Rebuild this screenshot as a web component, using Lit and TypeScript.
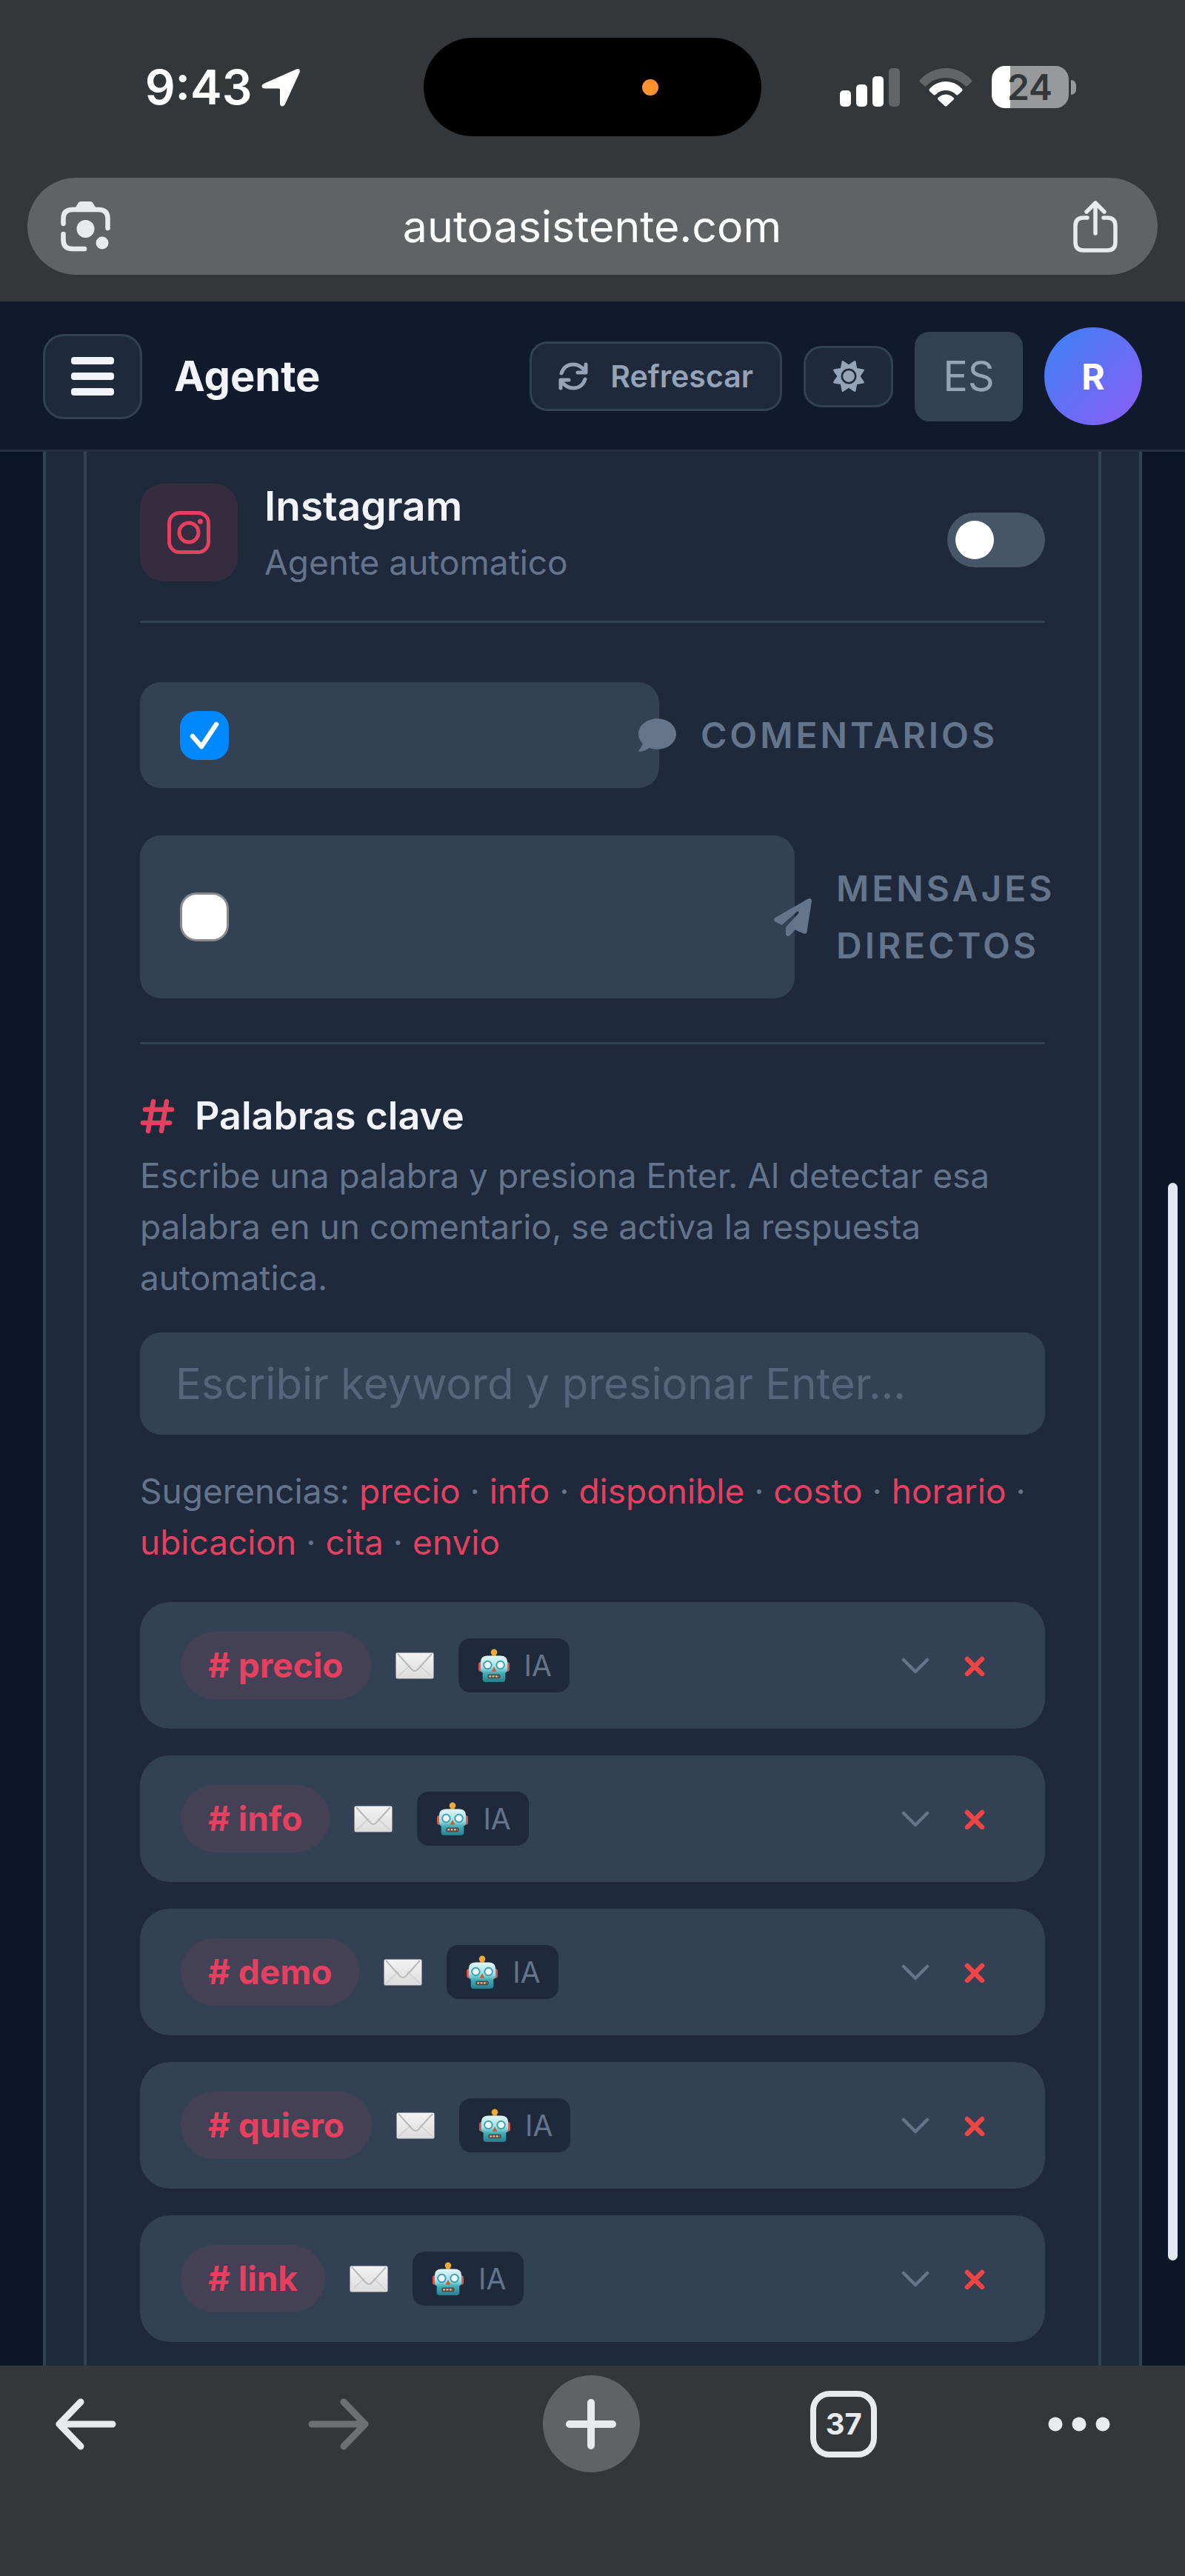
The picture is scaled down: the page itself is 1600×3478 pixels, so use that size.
import { LitElement, html, css, svg, nothing } from "lit";
import { customElement, property, state } from "lit/decorators.js";

const tokens = css`
  :host {
    font-family: Inter, "Liberation Sans", sans-serif;
    --chrome: #34373a;
    --chrome-soft: #5f6366;
    --chrome-ink: #e8eaed;
    --bar: #11192d;
    --page: #0d1629;
    --card: #1e293b;
    --line: #334155;
    --field: #334155;
    --ink: #f1f5f9;
    --soft: #94a3b8;
    --muted: #64748b;
    --accent: #e4405f;
  }
  *,
  *::before,
  *::after {
    box-sizing: border-box;
  }
  svg {
    display: block;
    flex: none;
  }
  button {
    font: inherit;
    color: inherit;
    background: none;
    border: 0;
    margin: 0;
    padding: 0;
    cursor: pointer;
  }
`;

/* Phone status row and the browser address pill. */
@customElement("browser-top")
export class BrowserTop extends LitElement {
  static styles = [
    tokens,
    css`
      :host {
        display: block;
        background: var(--chrome);
        color: #fff;
      }
      .status {
        display: grid;
        grid-template-columns: 1fr 456px 1fr;
        align-items: center;
        padding-top: 51px;
      }
      .clock,
      .signals {
        display: flex;
        align-items: center;
        justify-content: center;
      }
      .clock {
        gap: 13px;
        padding-left: 30px;
        font-size: 64px;
        font-weight: 600;
        line-height: 80px;
      }
      .signals {
        gap: 26px;
        padding-right: 42px;
      }
      .island {
        height: 133px;
        border-radius: 67px;
        background: #000;
        display: flex;
        align-items: center;
        justify-content: flex-end;
        padding-right: 139px;
      }
      .dot {
        width: 22px;
        height: 22px;
        border-radius: 50%;
        background: #ff9230;
      }
      .battery {
        display: flex;
        align-items: center;
        gap: 3px;
      }
      .cell {
        width: 104px;
        height: 57px;
        border-radius: 18px;
        background: linear-gradient(90deg, #fff 24%, #98999b 24%);
        color: #34373a;
        font-size: 48px;
        font-weight: 600;
        line-height: 57px;
        text-align: center;
      }
      .nub {
        width: 7px;
        height: 20px;
        border-radius: 0 7px 7px 0;
        background: #98999b;
      }
      .address {
        display: flex;
        align-items: center;
        justify-content: space-between;
        height: 131px;
        margin: 56px 37px 0;
        padding: 0 54px 0 44px;
        border-radius: 66px;
        background: var(--chrome-soft);
        color: var(--chrome-ink);
      }
      .site {
        font-size: 59px;
        line-height: 80px;
        color: #fff;
      }
      .tail {
        height: 36px;
      }
    `,
  ];

  render() {
    return html`
      <div class="status">
        <div class="clock">
          <span>9:43</span>
          <svg width="53" height="52" viewBox="0 0 53 52" aria-hidden="true">
            <path d="M47 1.500Q53 -0.500 51.500 6L32 48.500Q30 52 27.500 51.500Q25 51 25 47V29Q25 27.500 23.500 27.500H5Q1 27.500 0.500 25Q0 22.500 4 20.500Z" fill="#fff" />
          </svg>
        </div>
        <div class="island"><span class="dot"></span></div>
        <div class="signals">
          <svg width="81" height="52" viewBox="0 0 81 52" aria-hidden="true" fill="#fff">
            <rect x="0" y="30" width="15" height="22" rx="5" />
            <rect x="22" y="22" width="15" height="30" rx="5" />
            <rect x="44" y="11" width="15" height="41" rx="5" />
            <rect x="66" y="0" width="15" height="52" rx="5" fill="#626568" />
          </svg>
          <svg width="72" height="52" viewBox="0 0 72 52" aria-hidden="true">
            <path d="M1 16Q16 0 36 0T71 16Q72 17.500 70.500 19L65 24Q63.500 25 62 23.500Q51 13 36 13T10 23.500Q8.500 25 7 24L1.500 19Q0 17.500 1 16Z" fill="#626568" />
            <path d="M14 28Q23 18 36 18T58 28Q59 29.500 58 31L52.500 36Q51 37 49.500 35.500Q44 30 36 30T22.500 35.500Q21 37 19.500 36L14 31Q13 29.500 14 28Z" fill="#fff" />
            <path d="M25.500 40Q30 35.500 36 35.500T46.500 40Q47.500 41 46.500 42.500L37.500 51Q36 52 34.500 51L25.500 42.500Q24.500 41 25.500 40Z" fill="#fff" />
          </svg>
          <div class="battery"><span class="cell">24</span><span class="nub"></span></div>
        </div>
      </div>
      <div class="address">
        <button aria-label="Buscar con la cámara">
          <svg width="69" height="69" viewBox="0 0 69 69" fill="none" stroke="currentColor" stroke-width="6.500" stroke-linecap="round">
            <path d="M4.500 31V24Q4.500 12 17 12H52Q64.500 12 64.500 24V37" />
            <path d="M4.500 45V53Q4.500 65 17 65H33" />
            <path d="M19 12L25 2.500Q26 1 28 1H41Q43 1 44 2.500L50 12Z" fill="currentColor" stroke="none" />
            <circle cx="34.500" cy="38" r="12" fill="currentColor" stroke="none" />
            <circle cx="57" cy="57" r="8.500" fill="currentColor" stroke="none" />
          </svg>
        </button>
        <span class="site">autoasistente.com</span>
        <button aria-label="Compartir">
          <svg width="60" height="70" viewBox="0 0 60 70" fill="none" stroke="currentColor" stroke-width="5.500" stroke-linecap="round" stroke-linejoin="round">
            <path d="M19 23H14Q3 23 3 34V56Q3 67 14 67H46Q57 67 57 56V34Q57 23 46 23H41" />
            <path d="M30 44V4M18 15L30 3L42 15" />
          </svg>
        </button>
      </div>
      <div class="tail"></div>
    `;
  }
}

/* Application bar of the page. */
@customElement("agent-header")
export class AgentHeader extends LitElement {
  static styles = [
    tokens,
    css`
      :host {
        display: block;
        background: var(--bar);
        border-bottom: 3px solid #242f43;
      }
      .bar {
        display: flex;
        align-items: center;
        gap: 29px;
        padding: 35px 58px 33px;
      }
      .menu {
        display: grid;
        place-items: center;
        width: 134px;
        height: 115px;
        border: 3px solid var(--line);
        border-radius: 28px;
        background: var(--card);
        color: var(--ink);
      }
      h1 {
        flex: 1;
        margin: 0 0 0 14px;
        font-size: 56px;
        line-height: 80px;
        font-weight: 700;
        color: var(--ink);
      }
      .refresh,
      .theme {
        display: flex;
        align-items: center;
        justify-content: center;
        border: 3px solid var(--line);
        border-radius: 24px;
        background: var(--card);
        color: var(--soft);
      }
      .refresh {
        gap: 30px;
        height: 94px;
        padding: 0 36px;
        font-size: 41px;
        font-weight: 600;
      }
      .theme {
        width: 121px;
        height: 83px;
      }
      .lang {
        width: 146px;
        height: 121px;
        border-radius: 20px;
        background: var(--line);
        color: var(--soft);
        font-size: 56px;
      }
      .avatar {
        width: 132px;
        height: 132px;
        border-radius: 50%;
        background: linear-gradient(135deg, #3b82f6, #8b5cf6);
        color: #fff;
        font-size: 48px;
        font-weight: 700;
      }
    `,
  ];

  render() {
    return html`
      <header class="bar">
        <button class="menu" aria-label="Menú">
          <svg width="58" height="52" viewBox="0 0 58 52" fill="currentColor">
            <rect width="58" height="10" rx="4" />
            <rect y="21" width="58" height="10" rx="4" />
            <rect y="42" width="58" height="10" rx="4" />
          </svg>
        </button>
        <h1>Agente</h1>
        <button class="refresh">
          <svg width="40" height="38" viewBox="0 0 40 38" fill="none" stroke="currentColor" stroke-width="5" stroke-linecap="round" stroke-linejoin="round">
            <path d="M4 15Q8 3 20 3Q29 3 36 12M37 3V14H26" />
            <path d="M36 23Q32 35 20 35Q11 35 4 26M3 35V24H14" />
          </svg>
          <span>Refrescar</span>
        </button>
        <button class="theme" aria-label="Tema">
          <svg width="42" height="42" viewBox="0 0 512 512" fill="currentColor">
            <path d="M361.500 1.200c5 2.100 8.600 6.600 9.600 11.900L391 121l107.900 19.800c5.300 1 9.800 4.600 11.900 9.600s1.500 10.700-1.600 15.200L446.900 256l62.300 90.300c3.100 4.500 3.700 10.200 1.600 15.200s-6.600 8.600-11.900 9.600L391 391 371.100 498.900c-1 5.300-4.600 9.800-9.600 11.900s-10.700 1.500-15.200-1.600L256 446.900l-90.300 62.300c-4.500 3.100-10.200 3.700-15.200 1.600s-8.600-6.600-9.600-11.900L121 391 13.100 371.100c-5.300-1-9.800-4.600-11.900-9.600s-1.500-10.700 1.600-15.200L65.100 256 2.800 165.700c-3.100-4.500-3.700-10.200-1.600-15.200s6.600-8.600 11.900-9.600L121 121 140.900 13.100c1-5.300 4.600-9.800 9.600-11.900s10.700-1.500 15.200 1.600L256 65.100 346.300 2.800c4.500-3.100 10.200-3.700 15.200-1.600zM160 256a96 96 0 1 1 192 0 96 96 0 1 1 -192 0zm224 0a128 128 0 1 0 -256 0 128 128 0 1 0 256 0z" />
          </svg>
        </button>
        <button class="lang" aria-label="Idioma: ES">ES</button>
        <button class="avatar" aria-label="Cuenta R">R</button>
      </header>
    `;
  }
}

/* One checkbox line: a wide field, an icon on its edge, a caption. */
@customElement("channel-option")
export class ChannelOption extends LitElement {
  @property() name = "";
  @property() icon: "comment" | "plane" = "comment";
  @property({ type: Boolean }) checked = false;
  @property({ type: Boolean }) narrow = false;

  static styles = [
    tokens,
    css`
      :host {
        display: block;
      }
      label {
        display: flex;
        align-items: stretch;
        color: var(--muted);
        cursor: pointer;
      }
      .field {
        flex: 1;
        display: flex;
        align-items: center;
        padding: 0 54px;
        border-radius: 28px;
        background: var(--field);
      }
      .tick {
        display: grid;
        place-items: center;
      }
      .tick > * {
        grid-area: 1 / 1;
      }
      input {
        appearance: none;
        width: 66px;
        height: 66px;
        margin: 0;
        border: 3px solid #8a8a8e;
        border-radius: 22px;
        background: #fff;
      }
      input:checked {
        border-color: #0088ff;
        background: #0088ff;
      }
      .icon {
        align-self: center;
        margin: 0 33px 0 -28px;
      }
      .caption {
        width: 465px;
        padding: 33px 0;
        font-size: 48px;
        line-height: 77px;
        font-weight: 600;
        letter-spacing: 4px;
        text-transform: uppercase;
      }
      .narrow {
        width: 282px;
      }
    `,
  ];

  private toggle(e: Event) {
    this.checked = (e.target as HTMLInputElement).checked;
  }

  render() {
    const shape =
      this.icon === "comment"
        ? svg`<path d="M256 32C114.600 32 0 125.100 0 240c0 49.600 21.400 95 57 130.700C44.500 421.100 2.700 466 2.200 466.500c-2.200 2.300-2.800 5.700-1.500 8.700S4.800 480 8 480c66.300 0 116-31.800 140.600-51.400 32.700 12.300 69 19.400 107.400 19.400 141.400 0 256-93.100 256-208S397.400 32 256 32z" />`
        : svg`<path d="M498.100 5.600c10.100 7 15.400 19.100 13.500 31.200l-64 416c-1.500 9.700-7.400 18.200-16 23s-18.900 5.400-28 1.600L284 427.700l-68.500 74.100c-8.900 9.700-22.900 12.900-35.200 8.100S160 493.200 160 480V396.400c0-4 1.500-7.800 4.200-10.700L331.800 202.800c5.800-6.300 5.600-16-.4-22s-15.700-6.400-22-.7L106 360.800 17.700 316.600C7.100 311.300 .3 300.700 0 288.900s5.900-22.800 16.100-28.700l448-256c10.700-6.100 23.900-5.500 34 1.400z" />`;
    return html`
      <label>
        <span class="field">
          <span class="tick">
            <input type="checkbox" .checked=${this.checked} @change=${this.toggle} />
            ${this.checked
              ? html`<svg width="40" height="40" viewBox="0 0 40 40" fill="none" stroke="#fff" stroke-width="6.500" stroke-linecap="round" stroke-linejoin="round" aria-hidden="true">
                  <path d="M4 21L16 35L36 5" />
                </svg>`
              : nothing}
          </span>
        </span>
        <svg class="icon" width="51" height="51" viewBox="0 0 512 512" fill="currentColor" aria-hidden="true">${shape}</svg>
        <span class="caption ${this.narrow ? "narrow" : ""}">${this.name}</span>
      </label>
    `;
  }
}

/* Saved keyword with its reply mode and row actions. */
@customElement("keyword-row")
export class KeywordRow extends LitElement {
  @property() word = "";

  static styles = [
    tokens,
    css`
      :host {
        display: block;
      }
      .row {
        display: flex;
        align-items: center;
        gap: 33px;
        padding: 40px 55px;
        border-radius: 40px;
        background: var(--field);
      }
      .pill {
        padding: 0 37px;
        border-radius: 46px;
        background: rgba(228, 64, 95, 0.1);
        color: var(--accent);
        font-size: 46px;
        line-height: 91px;
        font-weight: 700;
      }
      .mode {
        display: flex;
        align-items: center;
        gap: 19px;
        padding: 0 24px 0 26px;
        border-radius: 16px;
        background: var(--card);
        color: var(--muted);
        font-size: 39px;
        line-height: 73px;
      }
      .actions {
        display: flex;
        margin-left: auto;
      }
      .actions button {
        display: grid;
        place-items: center;
        width: 80px;
        height: 80px;
        color: var(--muted);
      }
      .actions .remove {
        color: #ef4444;
      }
    `,
  ];

  render() {
    return html`
      <div class="row">
        <span class="pill"># ${this.word}</span>
        <svg width="52" height="36" viewBox="0 0 52 36" role="img" aria-label="Mensaje">
          <defs>
            <linearGradient id="paper" x1="0" y1="0" x2="0" y2="1">
              <stop offset="0" stop-color="#f3f3f3" />
              <stop offset="1" stop-color="#dcdcdc" />
            </linearGradient>
          </defs>
          <rect x="0.500" y="0.500" width="51" height="35" rx="2" fill="url(#paper)" />
          <path d="M2 34L20 17M50 34L32 17" stroke="#cfcfcf" stroke-width="1.500" fill="none" />
          <path d="M3 2L22 23Q26 27 30 23L49 2" stroke="#b9b9b9" stroke-width="2" fill="none" />
        </svg>
        <span class="mode">
          <svg width="44" height="46" viewBox="0 0 46 48" aria-hidden="true">
            <defs>
              <linearGradient id="metal" x1="0" y1="0" x2="0" y2="1">
                <stop offset="0" stop-color="#e2f7f8" />
                <stop offset="0.450" stop-color="#a3dde3" />
                <stop offset="0.650" stop-color="#43b0bb" />
                <stop offset="1" stop-color="#23808e" />
              </linearGradient>
            </defs>
            <rect x="1" y="19" width="6" height="13" rx="3" fill="#d3544f" />
            <rect x="39" y="19" width="6" height="13" rx="3" fill="#d3544f" />
            <path d="M19 11L21 6H25L27 11Z" fill="#b3742a" />
            <circle cx="23" cy="5" r="4.500" fill="#efa935" />
            <path d="M4 19Q4 10 14 10H32Q42 10 42 19V29Q42 33 39 34V43Q39 47 35 47H11Q7 47 7 43V34Q4 33 4 29Z" fill="url(#metal)" />
            <circle cx="14" cy="23" r="6.500" fill="#3c9fb4" />
            <circle cx="32" cy="23" r="6.500" fill="#3c9fb4" />
            <circle cx="14" cy="23" r="4.500" fill="#eafcff" />
            <circle cx="32" cy="23" r="4.500" fill="#eafcff" />
            <path d="M23 25L26.500 32H19.500Z" fill="#c4622d" />
            <rect x="14" y="36" width="18" height="6" rx="2" fill="#59453f" />
            <path d="M16 39H30" stroke="#d9c8a4" stroke-width="2.500" stroke-dasharray="3 1.500" />
          </svg>
          <span>IA</span>
        </span>
        <div class="actions">
          <button aria-label="Desplegar ${this.word}">
            <svg width="38" height="22" viewBox="0 0 38 22" fill="none" stroke="currentColor" stroke-width="4.500" stroke-linecap="round" stroke-linejoin="round">
              <path d="M3 3L19 19L35 3" />
            </svg>
          </button>
          <button class="remove" aria-label="Eliminar ${this.word}">
            <svg width="28" height="28" viewBox="0 0 28 28" fill="none" stroke="currentColor" stroke-width="6.500" stroke-linecap="round">
              <path d="M4 5L24 25M24 5L4 25" />
            </svg>
          </button>
        </div>
      </div>
    `;
  }
}

/* Instagram card: channels, keyword entry and the saved keywords. */
@customElement("agent-panel")
export class AgentPanel extends LitElement {
  @state() private keywords = ["precio", "info", "demo", "quiero", "link"];
  private suggestions = ["precio", "info", "disponible", "costo", "horario", "ubicacion", "cita", "envio"];

  static styles = [
    tokens,
    css`
      :host {
        display: flex;
        flex-direction: column;
        padding: 0 58px;
        background: var(--page);
      }
      .outer,
      .inner {
        flex: 1;
        border: solid var(--line);
        border-width: 0 4px;
        background: var(--card);
      }
      .outer {
        display: flex;
        flex-direction: column;
        padding: 0 51px;
      }
      .inner {
        padding: 33px 72px 32px;
      }
      .account {
        display: flex;
        align-items: center;
        height: 195px;
        padding-bottom: 23px;
      }
      .who {
        flex: 1;
        align-self: flex-start;
        display: flex;
        align-items: center;
        gap: 36px;
      }
      .tile {
        display: grid;
        place-items: center;
        width: 132px;
        height: 132px;
        border-radius: 32px;
        background: rgba(228, 64, 95, 0.12);
        color: var(--accent);
      }
      h2,
      h3,
      p {
        margin: 0;
      }
      h2 {
        font-size: 55px;
        line-height: 80px;
        font-weight: 600;
        color: var(--ink);
      }
      .sub {
        font-size: 46px;
        line-height: 72px;
        color: var(--muted);
      }
      .switch {
        appearance: none;
        display: flex;
        align-items: center;
        width: 132px;
        height: 74px;
        margin: 0;
        padding: 0 11px;
        border-radius: 37px;
        background: #475569;
        cursor: pointer;
      }
      .switch::before {
        content: "";
        width: 52px;
        height: 52px;
        border-radius: 50%;
        background: #fff;
      }
      .switch:checked {
        justify-content: flex-end;
        background: var(--accent);
      }
      .options {
        display: flex;
        flex-direction: column;
        gap: 64px;
        padding: 80px 0 59px;
        border: solid var(--line);
        border-width: 3px 0;
      }
      .heading {
        display: flex;
        align-items: center;
        gap: 27px;
        margin: 57px 0 6px;
        color: var(--accent);
      }
      h3 {
        font-size: 52px;
        line-height: 80px;
        font-weight: 600;
        color: var(--ink);
      }
      .hint {
        font-size: 46px;
        line-height: 69px;
        color: var(--muted);
      }
      .entry {
        display: block;
        width: 100%;
        height: 138px;
        margin: 39px 0 42px;
        padding: 0 48px;
        border: 0;
        border-radius: 28px;
        background: var(--field);
        color: var(--ink);
        font: inherit;
        font-size: 58px;
      }
      .entry::placeholder {
        color: #56657c;
        opacity: 1;
      }
      .hint button {
        color: var(--accent);
      }
      .list {
        display: flex;
        flex-direction: column;
        gap: 36px;
        margin-top: 46px;
      }
    `,
  ];

  private add(word: string) {
    const clean = word.trim().toLowerCase();
    if (clean && !this.keywords.includes(clean)) this.keywords = [...this.keywords, clean];
  }

  private onKey(e: KeyboardEvent) {
    if (e.key !== "Enter") return;
    const field = e.target as HTMLInputElement;
    this.add(field.value);
    field.value = "";
  }

  render() {
    return html`
      <div class="outer">
        <section class="inner">
          <div class="account">
            <div class="who">
              <span class="tile">
                <svg width="60" height="60" viewBox="0 0 60 60" fill="none" stroke="currentColor" stroke-width="5" aria-hidden="true">
                  <rect x="3.500" y="3.500" width="53" height="53" rx="14" />
                  <circle cx="30" cy="30" r="13" />
                  <circle cx="45.500" cy="15" r="3.500" fill="currentColor" stroke="none" />
                </svg>
              </span>
              <div>
                <h2 id="account">Instagram</h2>
                <p class="sub">Agente automatico</p>
              </div>
            </div>
            <input class="switch" type="checkbox" role="switch" aria-labelledby="account" />
          </div>
          <div class="options">
            <channel-option name="Comentarios" icon="comment" checked></channel-option>
            <channel-option name="Mensajes directos" icon="plane" narrow></channel-option>
          </div>
          <div class="heading">
            <svg width="47" height="48" viewBox="0 0 47 48" fill="none" stroke="currentColor" stroke-width="6.500" stroke-linecap="round" aria-hidden="true">
              <path d="M18 4L11 44M36 4L29 44M7 15H43M4 33H40" />
            </svg>
            <h3><label for="keyword">Palabras clave</label></h3>
          </div>
          <p class="hint">
            Escribe una palabra y presiona Enter. Al detectar esa palabra en un comentario, se activa la respuesta automatica.
          </p>
          <input id="keyword" class="entry" type="text" placeholder="Escribir keyword y presionar Enter..." @keydown=${this.onKey} />
          <p class="hint">
            Sugerencias:
            ${this.suggestions.map(
              (word, i) => html`${i ? " · " : nothing}<button @click=${() => this.add(word)}>${word}</button>`,
            )}
          </p>
          <div class="list">${this.keywords.map((word) => html`<keyword-row .word=${word}></keyword-row>`)}</div>
        </section>
      </div>
    `;
  }
}

/* Browser navigation at the foot of the screen. */
@customElement("browser-bottom")
export class BrowserBottom extends LitElement {
  static styles = [
    tokens,
    css`
      :host {
        display: block;
        background: var(--chrome);
        color: var(--chrome-ink);
      }
      nav {
        display: flex;
        justify-content: space-between;
        padding: 13px 54px 140px 50px;
      }
      button {
        display: flex;
        align-items: center;
        justify-content: center;
        width: 131px;
        height: 131px;
      }
      button:disabled {
        color: #6d7073;
      }
      .plus {
        border-radius: 50%;
        background: var(--chrome-soft);
      }
      .count {
        width: 90px;
        height: 90px;
        border: 8px solid currentColor;
        border-radius: 26px;
        font-size: 40px;
        line-height: 74px;
        font-weight: 700;
        text-align: center;
      }
      .more {
        justify-content: flex-start;
      }
    `,
  ];

  render() {
    return html`
      <nav>
        <button aria-label="Atrás">
          <svg width="84" height="70" viewBox="0 0 84 70" fill="none" stroke="currentColor" stroke-width="9" stroke-linecap="round" stroke-linejoin="round">
            <path d="M78 35H6M35 5L6 35L35 65" />
          </svg>
        </button>
        <button aria-label="Adelante" disabled>
          <svg width="84" height="70" viewBox="0 0 84 70" fill="none" stroke="currentColor" stroke-width="9" stroke-linecap="round" stroke-linejoin="round">
            <path d="M6 35H78M49 5L78 35L49 65" />
          </svg>
        </button>
        <button class="plus" aria-label="Nueva pestaña">
          <svg width="70" height="70" viewBox="0 0 70 70" fill="none" stroke="currentColor" stroke-width="10" stroke-linecap="round">
            <path d="M35 6V64M6 35H64" />
          </svg>
        </button>
        <button aria-label="37 pestañas"><span class="count">37</span></button>
        <button class="more" aria-label="Más">
          <svg width="84" height="20" viewBox="0 0 84 20" fill="currentColor">
            <circle cx="10" cy="10" r="9.500" />
            <circle cx="42" cy="10" r="9.500" />
            <circle cx="74" cy="10" r="9.500" />
          </svg>
        </button>
      </nav>
    `;
  }
}

@customElement("app-root")
export class AppRoot extends LitElement {
  static styles = [
    tokens,
    css`
      :host {
        display: flex;
        flex-direction: column;
        min-height: 100vh;
        background: #0d1629;
      }
      main {
        flex: 1;
        display: grid;
        position: relative;
      }
      .thumb {
        position: absolute;
        top: 987px;
        right: 10px;
        width: 13px;
        height: 1455px;
        border-radius: 7px;
        background: #e2e8f0;
      }
    `,
  ];

  render() {
    return html`
      <browser-top></browser-top>
      <agent-header></agent-header>
      <main>
        <agent-panel></agent-panel>
        <span class="thumb"></span>
      </main>
      <browser-bottom></browser-bottom>
    `;
  }
}
